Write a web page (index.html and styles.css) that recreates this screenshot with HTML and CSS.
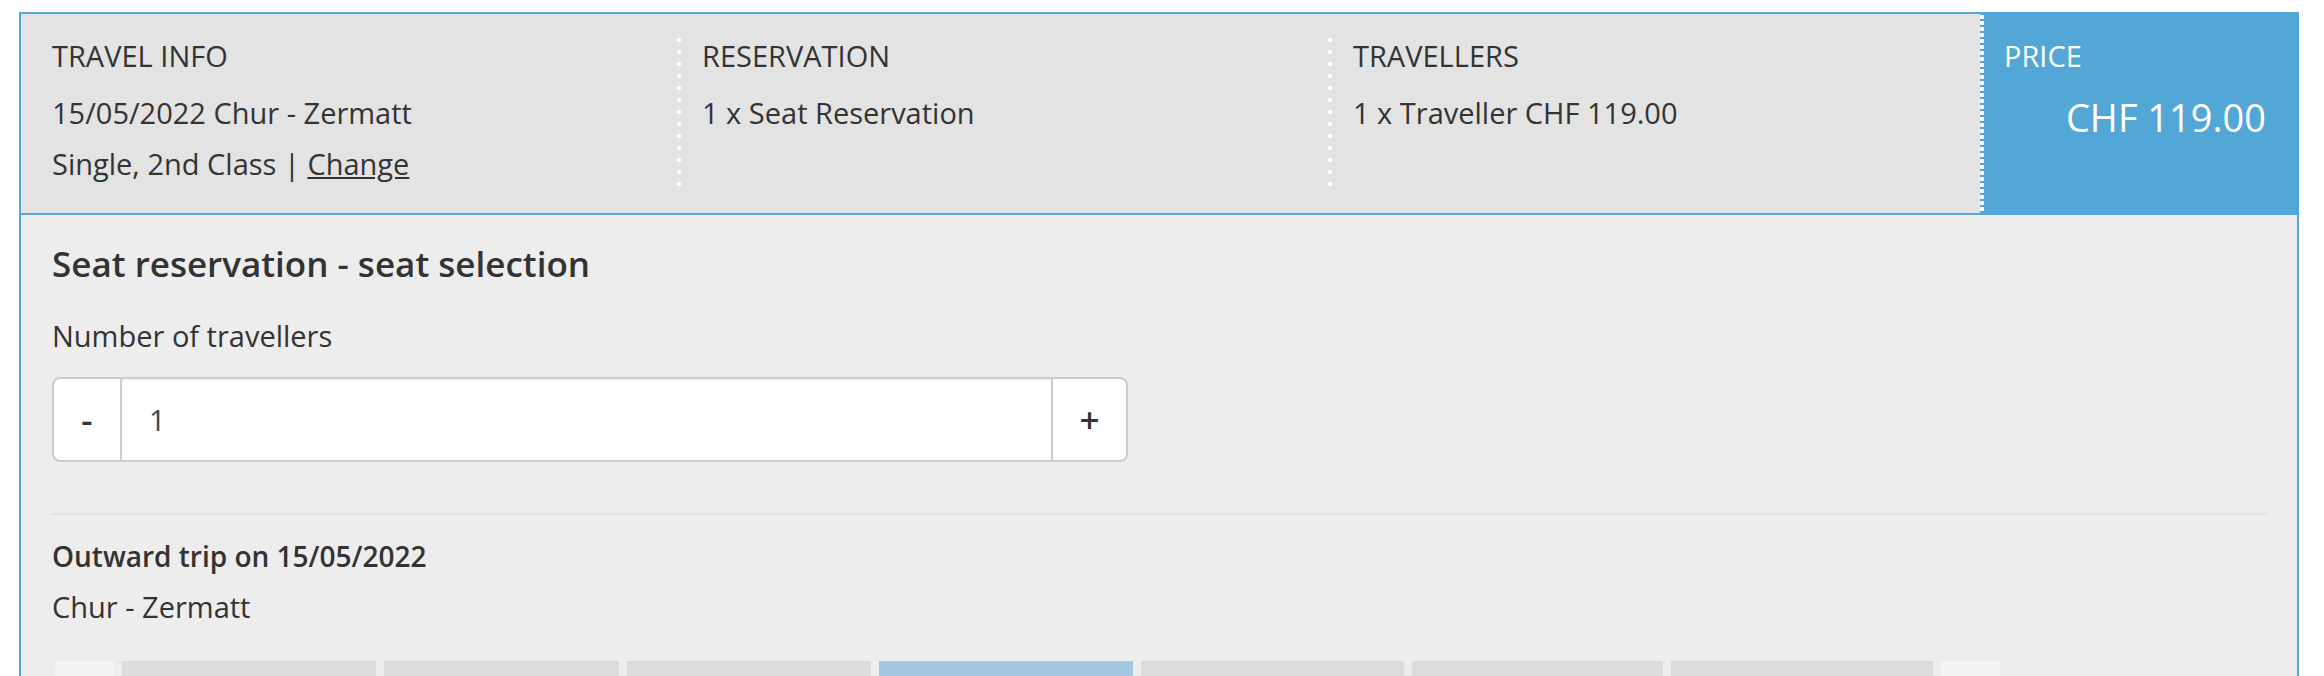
FILE: index.html
```html
<!DOCTYPE html>
<html lang="en">
<head>
    <meta charset="UTF-8">
    <meta name="viewport" content="width=device-width, initial-scale=1.0">
    <title>Seat reservation</title>
    <link rel="stylesheet" href="styles.css">
</head>
<body>
    <div class="booking">
        <div class="summary">
            <div class="summary-col first">
                <div class="summary-title">TRAVEL INFO</div>
                <div>15/05/2022 Chur - Zermatt</div>
                <div>Single, 2nd Class | <a href="#" class="change-link">Change</a></div>
            </div>
            <div class="summary-col">
                <div class="summary-title">RESERVATION</div>
                <div>1 x Seat Reservation</div>
            </div>
            <div class="summary-col">
                <div class="summary-title">TRAVELLERS</div>
                <div>1 x Traveller CHF 119.00</div>
            </div>
            <div class="summary-price">
                <div class="summary-title">PRICE</div>
                <div class="price-total">CHF 119.00</div>
            </div>
        </div>

        <div class="content">
            <h2>Seat reservation - seat selection</h2>
            <label class="field-label" for="travellers">Number of travellers</label>
            <div class="stepper">
                <button class="stepper-btn minus">-</button>
                <input type="text" id="travellers" value="1">
                <button class="stepper-btn plus">+</button>
            </div>

            <hr class="divider">

            <h3>Outward trip on 15/05/2022</h3>
            <p class="route">Chur - Zermatt</p>

            <div class="coaches">
                <div class="coach nav"></div>
                <div class="coach"></div>
                <div class="coach"></div>
                <div class="coach"></div>
                <div class="coach active"></div>
                <div class="coach"></div>
                <div class="coach"></div>
                <div class="coach"></div>
                <div class="coach nav"></div>
            </div>
        </div>
    </div>
</body>
</html>
```

FILE: styles.css
```css
* {
    box-sizing: border-box;
}
body {
    margin: 0;
    padding: 12px 25px 0 19px;
    font-family: "Open Sans", sans-serif;
    font-size: 29px;
    color: #333;
    background-color: #fff;
}
.booking {
    border: 2px solid #53a7d6;
    background-color: #ededed;
}

/* summary bar */
.summary {
    display: grid;
    grid-template-columns: 656px 651px 652px 1fr;
    background-color: #e3e3e3;
    border-bottom: 2px solid #53a7d6;
    line-height: 51px;
}
.summary-col {
    position: relative;
    padding: 16px 20px 24px 25px;
}
.summary-col.first {
    padding-left: 31px;
}
.summary-col + .summary-col::before {
    content: "";
    position: absolute;
    left: 0;
    top: 20px;
    bottom: 20px;
    width: 4px;
    background: radial-gradient(circle at 2px 6px, #fff 1.9px, transparent 2.4px) 0 0 / 4px 12px repeat-y;
}
.summary-title {
    margin-bottom: 6px;
}
.change-link {
    color: #333;
}
.summary-price {
    padding: 16px 31px 24px 24px;
    color: #fff;
    background: radial-gradient(circle at 2px 3px, #fff 2px, transparent 2.5px) 0 0 / 4px 6px repeat-y, #53a7d6;
}
.price-total {
    margin-top: 11px;
    text-align: right;
    font-size: 38px;
}

/* seat selection */
.content {
    padding: 26px 30px 0 31px;
}
h2 {
    margin: 0;
    font-size: 35px;
    font-weight: 600;
    line-height: 46px;
}
.field-label {
    display: block;
    margin-top: 23px;
    line-height: 51px;
}
.stepper {
    display: flex;
    width: 1076px;
    height: 85px;
    margin-top: 16px;
}
.stepper-btn {
    border: 2px solid #ccc;
    background-color: #fff;
    font-family: inherit;
    font-size: 35px;
    font-weight: 600;
    color: #333;
    padding: 0;
    cursor: pointer;
}
.stepper-btn.minus {
    width: 70px;
    border-radius: 8px 0 0 8px;
}
.stepper-btn.plus {
    width: 77px;
    border-radius: 0 8px 8px 0;
}
.stepper input {
    flex: 1;
    min-width: 0;
    border: 2px solid #ccc;
    border-left: none;
    border-right: none;
    padding: 0 0 0 27px;
    font-family: inherit;
    font-size: 29px;
    color: #444;
    background-color: #fff;
    box-shadow: inset 0 2px 2px rgba(0,0,0,0.05);
    outline: none;
}
.divider {
    height: 2px;
    margin: 51px 0 0;
    border: none;
    background-color: #e2e2e2;
}
h3 {
    margin: 16px 0 0;
    font-size: 28px;
    font-weight: 600;
    line-height: 51px;
}
.route {
    margin: 0;
    line-height: 50px;
}

/* coach tabs */
.coaches {
    display: flex;
    gap: 8px;
    margin: 29px 0 0 3px;
}
.coach {
    height: 60px;
    background-color: #dcdcdc;
}
.coach.nav {
    width: 59px;
    background-color: #f4f4f4;
}
.coach.active {
    background-color: #a2c9e1;
}
.coach:nth-child(2) { width: 254px; }
.coach:nth-child(3) { width: 235px; }
.coach:nth-child(4) { width: 244px; }
.coach:nth-child(5) { width: 254px; }
.coach:nth-child(6) { width: 263px; }
.coach:nth-child(7) { width: 251px; }
.coach:nth-child(8) { width: 262px; }
```
